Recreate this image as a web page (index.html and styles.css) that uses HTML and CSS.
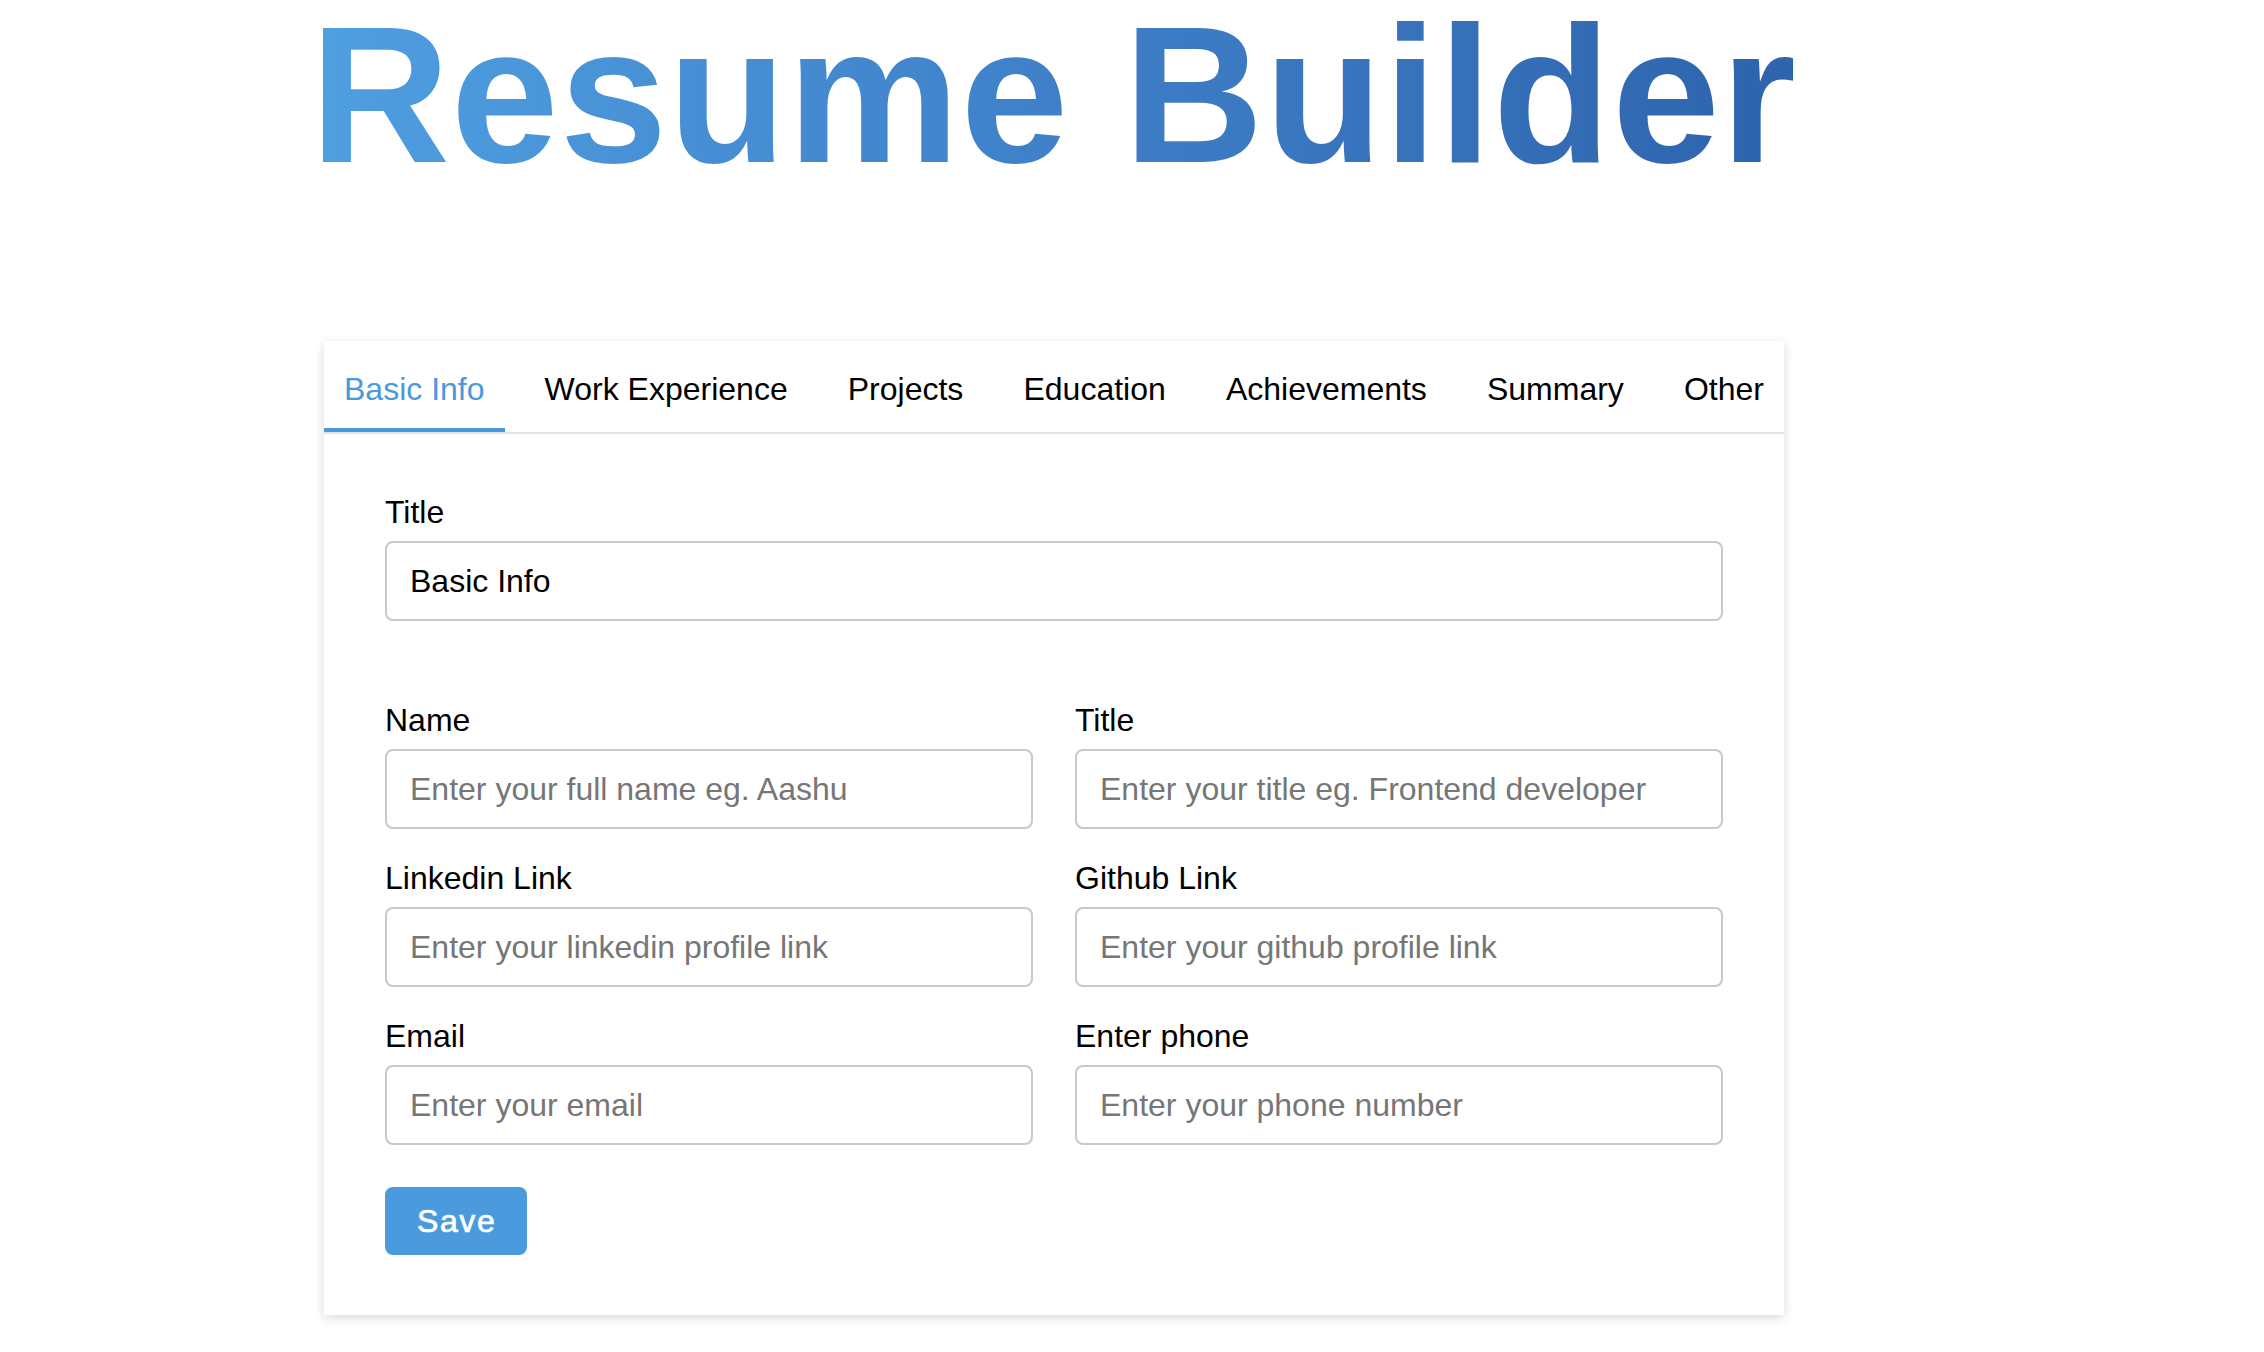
FILE: index.html
```html
<!DOCTYPE html>
<html lang="en">
<head>
<meta charset="utf-8">
<title>Resume Builder</title>
<link rel="stylesheet" href="styles.css">
</head>
<body>
<div class="page">
  <h1 class="brand">Resume Builder</h1>
  <div class="card">
    <nav class="tabs">
      <div class="tab active">Basic Info</div>
      <div class="tab">Work Experience</div>
      <div class="tab">Projects</div>
      <div class="tab">Education</div>
      <div class="tab">Achievements</div>
      <div class="tab">Summary</div>
      <div class="tab">Other</div>
    </nav>
    <form class="form">
      <div class="field field-main">
        <label class="label">Title</label>
        <input class="input" type="text" value="Basic Info">
      </div>
      <div class="grid">
        <div class="field">
          <label class="label">Name</label>
          <input class="input" type="text" placeholder="Enter your full name eg. Aashu">
        </div>
        <div class="field">
          <label class="label">Title</label>
          <input class="input" type="text" placeholder="Enter your title eg. Frontend developer">
        </div>
        <div class="field">
          <label class="label">Linkedin Link</label>
          <input class="input" type="text" placeholder="Enter your linkedin profile link">
        </div>
        <div class="field">
          <label class="label">Github Link</label>
          <input class="input" type="text" placeholder="Enter your github profile link">
        </div>
        <div class="field">
          <label class="label">Email</label>
          <input class="input" type="text" placeholder="Enter your email">
        </div>
        <div class="field">
          <label class="label">Enter phone</label>
          <input class="input" type="text" placeholder="Enter your phone number">
        </div>
      </div>
      <button class="save" type="button">Save</button>
    </form>
  </div>
</div>
</body>
</html>
```

FILE: styles.css
```css
* {
  box-sizing: border-box;
}

body {
  margin: 0;
  background: #ffffff;
  font-family: "Liberation Sans", Arial, Helvetica, sans-serif;
  color: #000000;
}

.page {
  padding-left: 310px;
  padding-bottom: 30px;
}

.brand {
  width: max-content;
  margin: 0 0 151px 0;
  padding-right: 4px;
  font-size: 194px;
  line-height: 190px;
  font-weight: 700;
  letter-spacing: 0.7px;
  background: linear-gradient(90deg, #4f9fe1 0%, #3f80c8 50%, #2e63ad 100%);
  -webkit-background-clip: text;
  background-clip: text;
  color: transparent;
  white-space: nowrap;
}

.card {
  width: 1460px;
  margin-left: 14px;
  background: #ffffff;
  box-shadow: 0 3px 10px rgba(0, 0, 0, 0.15);
}

.tabs {
  display: flex;
  justify-content: space-between;
  border-bottom: 2px solid #e4e4e4;
}

.tab {
  padding: 30px 20px 20px;
  font-size: 32px;
  line-height: 37px;
  color: #000000;
  border-bottom: 4px solid transparent;
  white-space: nowrap;
}

.tab.active {
  color: #4a98dd;
  border-bottom-color: #4a98dd;
}

.form {
  padding: 60px 61px 60px;
}

.field {
  display: flex;
  flex-direction: column;
}

.field-main {
  margin-bottom: 81px;
}

.label {
  font-size: 32px;
  line-height: 37px;
  margin-bottom: 10px;
}

.input {
  width: 100%;
  height: 80px;
  padding: 0 23px;
  border: 2px solid #c9c9c9;
  border-radius: 8px;
  font-family: "Liberation Sans", Arial, Helvetica, sans-serif;
  font-size: 32px;
  color: #000000;
  background: #ffffff;
  outline: none;
}

.input::placeholder {
  color: #767676;
  opacity: 1;
}

.grid {
  display: grid;
  grid-template-columns: 1fr 1fr;
  column-gap: 42px;
  row-gap: 31px;
}

.save {
  margin-top: 42px;
  height: 68px;
  padding: 0 31px 0 32px;
  border: none;
  border-radius: 8px;
  background: #4b9add;
  color: #ffffff;
  font-family: "Liberation Sans", Arial, Helvetica, sans-serif;
  font-size: 32px;
  font-weight: 400;
  letter-spacing: 1.6px;
  -webkit-text-stroke: 0.7px #ffffff;
}
```
